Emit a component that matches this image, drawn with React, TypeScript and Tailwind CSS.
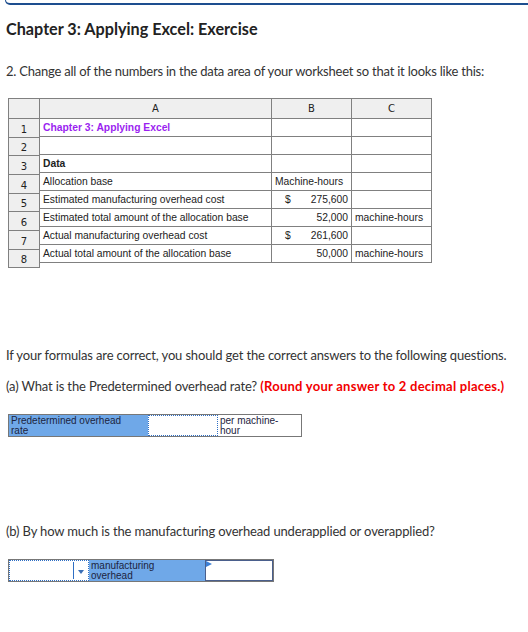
import React from 'react';

const sheet = { fontFamily: '"Liberation Sans", Arial, sans-serif' };
const headFont = { fontFamily: '"DejaVu Sans", Verdana, sans-serif' };
const body = { fontFamily: 'Lato, "Open Sans", sans-serif' };

const numHeights = [19, 18, 19, 19, 18, 19, 19, 18];

type Row = { a: React.ReactNode; b?: React.ReactNode; c?: React.ReactNode };

const rows: Row[] = [
  { a: <span className="font-bold text-[#9b1ff0]">Chapter 3: Applying Excel</span> },
  { a: '' },
  { a: <span className="font-bold">Data</span> },
  { a: 'Allocation base', b: <span className="pl-[3px]">Machine-hours</span> },
  {
    a: 'Estimated manufacturing overhead cost',
    b: (
      <span className="flex w-full justify-between pl-[13px] pr-[3px]">
        <span>$</span>
        <span>275,600</span>
      </span>
    ),
  },
  {
    a: 'Estimated total amount of the allocation base',
    b: <span className="ml-auto pr-[3px]">52,000</span>,
    c: 'machine-hours',
  },
  {
    a: 'Actual manufacturing overhead cost',
    b: (
      <span className="flex w-full justify-between pl-[13px] pr-[3px]">
        <span>$</span>
        <span>261,600</span>
      </span>
    ),
  },
  {
    a: 'Actual total amount of the allocation base',
    b: <span className="ml-auto pr-[3px]">50,000</span>,
    c: 'machine-hours',
  },
];

function Sheet() {
  return (
    <div className="ml-[8px] mt-[17px] flex text-[10.3px] text-[#222]" style={sheet}>
      {/* row numbers column */}
      <div className="flex w-[32px] flex-col border-l border-t border-[#808080] text-[10px]" style={headFont}>
        <div className="h-[20px] border-b border-r border-[#808080] bg-[#efefef]" />
        {numHeights.map((h, i) => (
          <div
            key={i}
            className="flex items-center justify-center border-b border-r border-[#808080] bg-[#efefef] pt-[2px]"
            style={{ height: h }}
          >
            {i + 1}
          </div>
        ))}
      </div>
      <div className="flex flex-col border-t border-[#808080]">
        <div className="flex h-[20px] bg-[#efefef] text-[10px]" style={headFont}>
          <div className="flex w-[232px] items-center justify-center border-b border-r border-[#808080]">A</div>
          <div className="flex w-[80px] items-center justify-center border-b border-r border-[#808080]">B</div>
          <div className="flex w-[80px] items-center justify-center border-b border-r border-[#808080]">C</div>
        </div>
        {rows.map((r, i) => (
          <div key={i} className="flex h-[18px]">
            <div className="flex w-[232px] items-center border-b border-r border-[#808080] px-[3px]">{r.a}</div>
            <div className="flex w-[80px] items-center border-b border-r border-[#808080]">{r.b}</div>
            <div className="flex w-[80px] items-center border-b border-r border-[#808080] px-[3px]">{r.c}</div>
          </div>
        ))}
      </div>
    </div>
  );
}

export default function App() {
  return (
    <div className="h-[632px] w-[528px] overflow-hidden bg-white text-[#333]" style={body}>
      <div className="ml-[5px] h-[5px] rounded-bl-[6px] border-b-2 border-l border-[#1d4e8f]" />
      <h1 className="ml-[6px] mt-[14px] text-[16.2px] font-bold leading-[20px] text-[#222]">
        Chapter 3: Applying Excel: Exercise
      </h1>
      <p className="ml-[6px] mt-[22px] text-[13px] leading-[20px] tracking-[-0.22px]">
        2. Change all of the numbers in the data area of your worksheet so that it looks like this:
      </p>

      <Sheet />

      <p className="ml-[6px] mt-[77px] text-[13px] leading-[20px] tracking-[-0.15px]">
        If your formulas are correct, you should get the correct answers to the following questions.
      </p>
      <p className="ml-[6px] mt-[11px] text-[13px] leading-[20px] tracking-[-0.15px]">
        (a) What is the Predetermined overhead rate?{' '}
        <span className="font-bold tracking-[0.25px] text-[#f20000]">(Round your answer to 2 decimal places.)</span>
      </p>

      <div className="ml-[8px] mt-[18px] flex h-[23px] w-[294px] border border-[#777] text-[10px] leading-[10px]" style={sheet}>
        <div className="w-[139px] bg-[#6fa8e8] px-[2px] pt-[1px] text-[#1c2440]">
          Predetermined overhead
          <br />
          rate
        </div>
        <input
          aria-label="Predetermined overhead rate"
          className="w-[70px] border border-dotted border-[#2f6fc4] bg-white outline-none"
        />
        <div className="flex-1 px-[2px] pt-[1px] text-[#1c2440]">
          per machine-
          <br />
          hour
        </div>
      </div>

      <p className="ml-[6px] mt-[84px] text-[13px] leading-[20px] tracking-[-0.15px]">
        (b) By how much is the manufacturing overhead underapplied or overapplied?
      </p>

      <div className="ml-[8px] mt-[18px] flex h-[23px] w-[266px] border border-[#777] text-[10px] leading-[10px]" style={sheet}>
        <div className="flex w-[80px] items-center border border-dotted border-[#2f6fc4] bg-white">
          <div className="flex-1" />
          <div className="h-[17px] w-px bg-[#2f6fc4]" />
          <svg width="14" height="8" viewBox="0 0 14 8" className="mt-[2px]">
            <path d="M4 2 L10 2 L7 6 Z" fill="#3b6fb6" />
          </svg>
        </div>
        <div className="w-[116px] bg-[#6fa8e8] px-[2px] pt-[1px] text-[#1c2440]">
          manufacturing
          <br />
          overhead
        </div>
        <div className="relative flex-1 bg-white">
          <input
            aria-label="Amount"
            className="h-full w-full border border-[#4a5f8c] bg-white outline-none"
          />
          <svg width="6" height="6" viewBox="0 0 6 6" className="absolute left-[1px] top-[1px]">
            <path d="M0 0 L6 3 L0 6 Z" fill="#3b7fd6" />
          </svg>
        </div>
      </div>
    </div>
  );
}
